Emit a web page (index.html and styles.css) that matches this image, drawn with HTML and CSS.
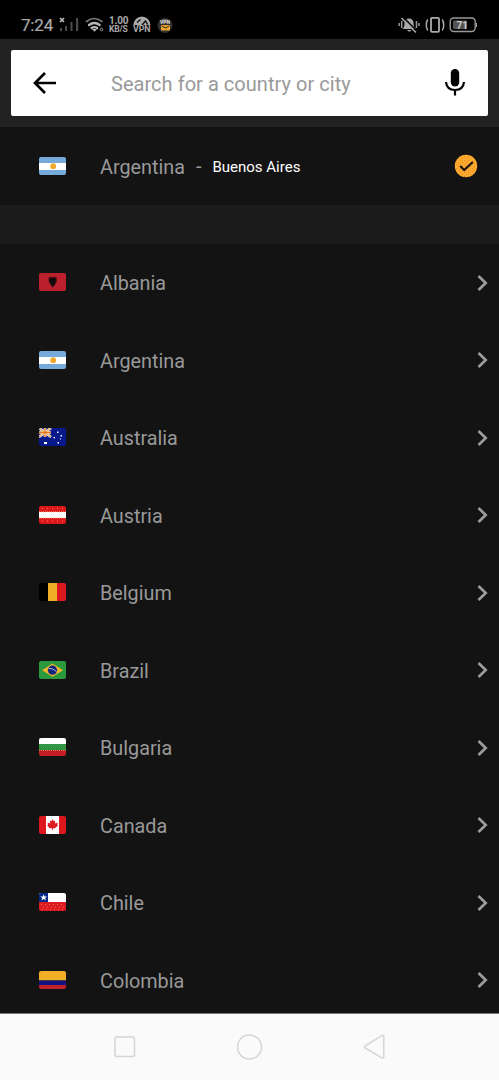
FILE: index.html
```
<!DOCTYPE html>
<html lang="en">
<head>
<meta charset="utf-8">
<title>Choose location</title>
<link rel="stylesheet" href="styles.css">
</head>
<body>
<svg width="0" height="0" class="defs">
  <symbol id="chevron" viewBox="0 0 12 18"><path d="M2.500 2l7.200 7-7.200 7" fill="none" stroke="#9c9c9c" stroke-width="2.700"/></symbol>
  <symbol id="argentina" viewBox="0 0 27 18"><path fill="#75aadb" d="M0 0h27v18H0z"/><path fill="#fff" d="M0 6h27v7H0z"/><circle cx="14.2" cy="9.2" r="2.9" fill="#efa92d"/></symbol>
</svg>
<div class="screen">
  <header class="status">
    <span class="clock">7:24</span>
    <svg class="signal" width="20" height="16" viewBox="0 0 20 16"><path d="M1 1l4 4M5 1L1 5" stroke="#bbb" stroke-width="1.7"/><g fill="#4b4b4b"><path d="M1 11h2v3H1zM6 9h2v5H6zM11.500 5h2v9h-2zM17 1h2.200v13H17z"/></g></svg>
    <svg class="wifi" width="20" height="16" viewBox="0 0 20 16"><g fill="none" stroke-linecap="round"><path d="M1.500 4.500q7.500-6 15.500 0" stroke="#777" stroke-width="1.700"/><path d="M4 8q5.300-4 10.700 0M6.500 11q2.900-2 5.700 0" stroke="#b9b9b9" stroke-width="2.200"/></g><path d="M6.700 11.800h5.500l-2.700 3z" fill="#b9b9b9"/><circle cx="16.500" cy="12.500" r="1.300" fill="none" stroke="#999"/></svg>
    <span class="speed"><b>1.00</b><b>KB/S</b></span>
    <span class="vpn"><svg width="18" height="9" viewBox="0 0 18 9"><path d="M.5 9a8.300 8.500 0 0 1 16.800 0z" fill="#aaa"/><path d="M4 6.500l3.500-3M9 9l3.500-4 2 3.500" fill="none" stroke="#151515" stroke-width="1.500"/></svg><b>VPN</b></span>
    <svg class="app" width="16" height="17" viewBox="0 0 16 17"><circle cx="8" cy="8.500" r="7.500" fill="#303030"/><path d="M3 6q0-4 5-4t5 4z" fill="#555"/><text x="8" y="7" text-anchor="middle" class="app-text">VPN</text><rect x="4" y="8" width="9" height="5.500" rx="1" fill="#e9a72d"/><path d="M5 9l3.500 2L12 9" stroke="#28200f" fill="none"/></svg>
    <span class="spacer"></span>
    <svg class="mute" width="22" height="18" viewBox="0 0 22 18"><path d="M4.500 13q2-1.500 2-6a4.500 4.500 0 0 1 9 0q0 4.500 2.500 6zM9 14h4.500q-2.200 3-4.500 0z" fill="#aaa"/><path d="M3.700 5v7M18.500 5v7M1.200 7v3M21 7v3" stroke="#999" stroke-width="1.500"/><path d="M5 1l14.500 14.500" stroke="#000" stroke-width="1.500"/><path d="M3.500 2L18 16.500" stroke="#aaa" stroke-width="1.500"/></svg>
    <svg class="vibrate" width="20" height="18" viewBox="0 0 20 18"><g fill="none" stroke="#aaa" stroke-width="1.500"><rect x="6" y="1.800" width="8" height="14" rx="1" stroke-width="1.800"/><path d="M2.800 3.500q-1.500 2-1.500 5.500t1.500 5.500M17.200 3.500q1.500 2 1.500 5.500t-1.500 5.500"/></g></svg>
    <svg class="battery" width="29" height="18" viewBox="0 0 29 18"><rect x="1.200" y="2" width="25" height="13.500" rx="3.500" fill="none" stroke="#999" stroke-width="1.400"/><rect x="4" y="4.500" width="14" height="8.500" rx="1" fill="#545454"/><path d="M27.500 7v4" stroke="#999"/><text x="13.300" y="12.600" text-anchor="middle" class="level">71</text></svg>
  </header>
  <div class="toolbar">
    <div class="search">
      <svg class="back" width="24" height="24" viewBox="0 0 24 24"><path d="M24 12H3.500M13 2L3 12l10 10" fill="none" stroke="#000" stroke-width="2.700"/></svg>
      <span class="hint">Search for a country or city</span>
      <svg class="mic" width="22" height="28" viewBox="0 0 22 28"><rect x="6.800" y="0" width="8.400" height="17.500" rx="4.200"/><path d="M2 13q.7 8 9 8t9-8M11 20.500v6" fill="none" stroke="#000" stroke-width="2.200"/></svg>
    </div>
  </div>
  <div class="row selected">
    <svg class="flag"><use href="#argentina"/></svg><span class="country">Argentina</span><span class="dash">-</span><span class="city">Buenos Aires</span>
    <svg class="check" width="24" height="24" viewBox="0 0 24 24"><defs><pattern id="dots" width="4" height="4" patternUnits="userSpaceOnUse"><rect width="4" height="4" fill="#fbac2e"/><path d="M0 0h1v1H0zM2 2h1v1H2z" fill="#f77a25"/></pattern></defs><circle cx="12" cy="12" r="11.200" fill="url(#dots)"/><path d="M6.200 12l4 4L18.800 8" fill="none" stroke="#1b1710" stroke-width="2.200"/></svg>
  </div>
  <div class="divider"></div>
  <main class="list">
    <div class="row"><svg class="flag" viewBox="0 0 27 18"><path fill="#bd202d" d="M0 0h27v18H0z"/><path fill="#160b0c" d="M9.500 4l2 1.500-.5-2 2.200.8.500 1.200.5-1.200 2.200-.8-.5 2 1.800-1.300-.3 3.200.6 1-1.500 1 .3 1.800-1.500.3-.3 1.600-1.300 1.300-1.300-1.300-.3-1.600-1.500-.3.300-1.800-1.500-1 .6-1z"/></svg><span class="country">Albania</span><svg class="arrow"><use href="#chevron"/></svg></div>
    <div class="row"><svg class="flag"><use href="#argentina"/></svg><span class="country">Argentina</span><svg class="arrow"><use href="#chevron"/></svg></div>
    <div class="row"><svg class="flag" viewBox="0 0 27 18"><path fill="#07198b" d="M0 0h27v18H0z"/><path d="M0 0l12 9M12 0L0 9M6 0v9M0 4.500h12" stroke="#f5e7d0" stroke-width="2.600"/><path d="M0 0l12 9M12 0L0 9" stroke="#e6a34c"/><path d="M6 0v9M0 4.500h12" stroke="#e67825" stroke-width="1.300"/><path fill="#fff" d="M5 14h3v2H5zM18 3.500h1.500V5H18zM21.500 7H23v1.500h-1.500zM14.500 9H16v1.200h-1.500zM18.500 14H20v1.500h-1.500zM21 10.500h1v1h-1z"/></svg><span class="country">Australia</span><svg class="arrow"><use href="#chevron"/></svg></div>
    <div class="row"><svg class="flag" viewBox="0 0 27 18"><path fill="#dc171b" d="M0 0h27v18H0z"/><path fill="#fff" d="M0 6h27v6H0z"/><path d="M0 5.800h27M0 12h27" stroke="#f3b273" stroke-width=".8" stroke-dasharray="1 1"/><path d="M3 2.500h22M3 15h22" stroke="#f5a16b" stroke-width=".7" stroke-dasharray="1 4"/></svg><span class="country">Austria</span><svg class="arrow"><use href="#chevron"/></svg></div>
    <div class="row"><svg class="flag" viewBox="0 0 27 18"><path d="M0 0h9v18H0z"/><path fill="#f1ae27" d="M9 0h9v18H9z"/><path fill="#dc171e" d="M18 0h9v18h-9z"/></svg><span class="country">Belgium</span><svg class="arrow"><use href="#chevron"/></svg></div>
    <div class="row"><svg class="flag" viewBox="0 0 27 18"><path fill="#2b9a3e" d="M0 0h27v18H0z"/><path fill="#efb52d" d="M3 9.200L13.500 2.500 24 9.200l-10.500 6.600z"/><circle cx="13.500" cy="9.200" r="4.600" fill="#14257f"/><path d="M9.500 7.500q4-.8 8 3" fill="none" stroke="#a6b9ce"/></svg><span class="country">Brazil</span><svg class="arrow"><use href="#chevron"/></svg></div>
    <div class="row"><svg class="flag" viewBox="0 0 27 18"><path fill="#fff" d="M0 0h27v6H0z"/><path fill="#339546" d="M0 6h27v6H0z"/><path fill="#c41d26" d="M0 12h27v6H0z"/><path d="M0 12.500h27" stroke="#e0a14a" stroke-width=".8" stroke-dasharray="1 1"/></svg><span class="country">Bulgaria</span><svg class="arrow"><use href="#chevron"/></svg></div>
    <div class="row"><svg class="flag" viewBox="0 0 27 18"><path fill="#dc171e" d="M0 0h27v18H0z"/><path fill="#fff" d="M7 0h13v18H7z"/><path fill="#df1c21" d="M13.600 3.200l1.300 2 1.200-.7v3l2.700-.9-.6 2 .9.800-3.300 2.900h-1.900v2h-.8v-2h-2.300l-2.600-2.900.8-.8-.6-2 2.600.9-.1-3 1.400.7z"/></svg><span class="country">Canada</span><svg class="arrow"><use href="#chevron"/></svg></div>
    <div class="row"><svg class="flag" viewBox="0 0 27 18"><path fill="#fff" d="M0 0h27v9H0z"/><path fill="#07288b" d="M0 0h9v9H0z"/><path fill="#dc1a20" d="M0 9h27v9H0z"/><path fill="#fff" d="M4.700 1.200l.9 2.200h2.500L6.200 5l.7 2.500-2.200-1.400-2.200 1.400L3.200 5 1.300 3.400h2.500z"/><path d="M2 11.500h23M4 14h21M3 16.300h21" stroke="#f48b72" stroke-width=".7" stroke-dasharray="1 3"/></svg><span class="country">Chile</span><svg class="arrow"><use href="#chevron"/></svg></div>
    <div class="row"><svg class="flag" viewBox="0 0 27 18"><path fill="#f1ae27" d="M0 0h27v9.500H0z"/><path fill="#14127f" d="M0 9.500h27V14H0z"/><path fill="#c1202d" d="M0 14h27v4H0z"/></svg><span class="country">Colombia</span><svg class="arrow"><use href="#chevron"/></svg></div>
  </main>
  <nav class="navbar">
    <svg width="26" height="26" viewBox="0 0 26 26"><rect x="3" y="3" width="19.500" height="19.500" rx="2"/></svg>
    <svg width="26" height="26" viewBox="0 0 26 26"><circle cx="12.500" cy="13" r="12"/></svg>
    <svg width="26" height="26" viewBox="0 0 26 26"><path d="M3 12L19.500 1.800q2.300-1.300 2.300 1.200v19.500q0 2.500-2.300 1.200L3 14q-1.500-1 0-2z"/></svg>
  </nav>
</div>
</body>
</html>
```

FILE: styles.css
```
* { box-sizing: border-box; }
body { margin: 0; background: #131313; font-family: Roboto, "Liberation Sans", sans-serif; }
svg { display: block; flex: none; }
.defs { display: none; }
.screen { width: 499px; height: 1080px; display: flex; flex-direction: column; overflow: hidden; }

.status { height: 39px; flex: none; background: #000; color: #aaa; display: flex; align-items: center; padding: 11px 21px 0 21px; }
.clock { width: 38px; font-size: 17px; line-height: 20px; letter-spacing: -.2px; -webkit-text-stroke: .2px #aaa; }
.signal { margin-top: -1px; }
.wifi { margin-left: 6px; }
.speed { width: 20px; margin-left: 4px; display: flex; flex-direction: column; font-size: 8.5px; line-height: 9px; letter-spacing: -.2px; white-space: nowrap; }
.speed b:first-child { font-size: 10px; line-height: 9px; }
.vpn { width: 18px; margin-left: 4px; display: flex; flex-direction: column; font-size: 8.8px; line-height: 9px; letter-spacing: -.1px; }
.app { margin-left: 6px; }
.app-text { font: bold 5px Roboto, sans-serif; fill: #ddd; }
.spacer { flex: 1; }
.vibrate { margin-left: 5px; }
.battery { margin-left: 4px; }
.level { font: bold 10px Roboto, sans-serif; fill: #ccc; }

.toolbar { height: 88px; flex: none; background: #222; padding: 11px 11px 0; }
.search { height: 66px; background: #fff; border-radius: 2px; display: flex; align-items: center; padding: 0 22px 0 21px; }
.hint { flex: 1; margin-left: 55px; padding-top: 2px; font-size: 20px; letter-spacing: .04px; color: #999; }

.row { height: 77.5px; flex: none; display: flex; align-items: center; padding: 0 11px 0 39px; }
.flag { width: 27px; height: 18px; border-radius: 2px; margin-top: -1px; overflow: hidden; }
.country { margin-left: 34px; padding-top: 2.7px; font-size: 19.8px; line-height: 24px; color: #999; }
.arrow { width: 12px; height: 18px; margin-left: auto; margin-top: -.5px; }
.row.selected { height: 78px; padding-right: 21px; }
.selected .country { padding-top: 3px; }
.dash { margin-left: 11px; font-size: 20px; color: #999; }
.city { margin-left: 11px; padding-top: 1px; font-size: 15px; color: #fff; }
.check { margin-left: auto; }
.divider { height: 39px; flex: none; background: #1b1b1b; }
.list { height: 769px; flex: none; overflow: hidden; }

.navbar { height: 67px; flex: none; background: #fafafa; border-top: 1px solid #777; display: flex; justify-content: space-between; align-items: center; padding: 0 111px 0 112px; }
.navbar svg { fill: none; stroke: #d5d5d5; stroke-width: 1.5; }
```
